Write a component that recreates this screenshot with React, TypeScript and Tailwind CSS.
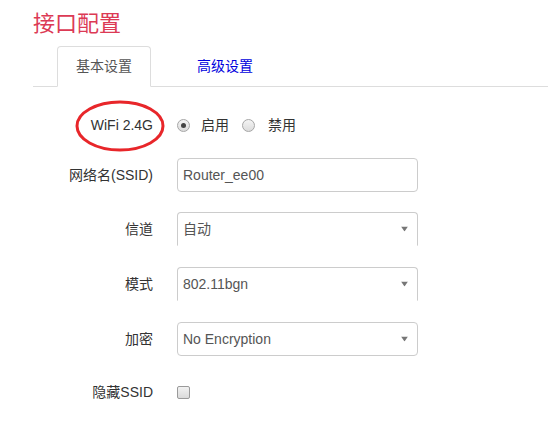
import React from 'react';

const font = { fontFamily: '"Liberation Sans", "Noto Sans CJK SC", sans-serif' };

const Caret = () => (
    <svg width="7" height="5" viewBox="0 0 7 5" className="absolute right-[9px] top-1/2 -translate-y-1/2">
        <path d="M0 0 H7 L3.5 5 Z" fill="#777" />
    </svg>
);

const Radio = ({ checked }: { checked?: boolean }) => (
    <span className="flex h-[13px] w-[13px] items-center justify-center rounded-full border border-[#a6a6a6] bg-gradient-to-b from-[#f4f4f4] to-[#dcdcdc]">
        {checked && <span className="h-[5px] w-[5px] rounded-full bg-[#444]" />}
    </span>
);

const Select = ({ value, open }: { value: string; open?: boolean }) => (
    <div
        className={`relative flex h-[34px] w-[241px] items-center rounded-[4px] border border-[#ccc] bg-white pl-[5px] text-[14px] text-[#555] ${open ? 'rounded-b-none border-b-transparent' : ''}`}
    >
        {value}
        <Caret />
    </div>
);

function Row({ label, children, className = '' }: { label: string; children: React.ReactNode; className?: string }) {
    return (
        <div className={`flex items-center ${className}`}>
            <div className="w-[121px] pr-px text-right text-[14px] text-[#333]">{label}</div>
            <div className="ml-[23px] flex items-center">{children}</div>
        </div>
    );
}

export default function App() {
    return (
        <div className="relative h-[432px] w-[548px] overflow-hidden bg-white pl-[33px]" style={font}>
            {/* Title */}
            <h1 className="pt-[10px] text-[22px] leading-[28px] font-normal text-[#dc3a55]">接口配置</h1>

            {/* Tabs */}
            <div className="mt-[8px] flex border-b border-[#ddd] pl-[24px]">
                <div className="-mb-px flex h-[41px] w-[94px] items-center justify-center rounded-t-[4px] border border-[#ddd] border-b-white bg-white text-[14px] text-[#555]">
                    基本设置
                </div>
                <div className="ml-[27px] flex h-[40px] items-center px-[19px] text-[14px] text-[#0000dd]">高级设置</div>
            </div>

            {/* Form */}
            <div className="mt-[21px]">
                <Row label="WiFi 2.4G" className="h-[34px]">
                    <Radio checked />
                    <span className="ml-[11px] text-[14px] text-[#333]">启用</span>
                    <span className="ml-[13px]">
                        <Radio />
                    </span>
                    <span className="ml-[13px] text-[14px] text-[#333]">禁用</span>
                </Row>

                <Row label="网络名(SSID)" className="mt-[16px]">
                    <div className="flex h-[34px] w-[241px] items-center rounded-[4px] border border-[#ccc] bg-white pl-[5px] text-[14px] text-[#555]">
                        Router_ee00
                    </div>
                </Row>

                <Row label="信道" className="mt-[20px]">
                    <Select value="自动" open />
                </Row>

                <Row label="模式" className="mt-[21px]">
                    <Select value="802.11bgn" open />
                </Row>

                <Row label="加密" className="mt-[21px]">
                    <Select value="No Encryption" />
                </Row>

                <Row label="隐藏SSID" className="mt-[19px] h-[34px]">
                    <span className="h-[13px] w-[13px] rounded-[2px] border border-[#9a9a9a] bg-gradient-to-b from-[#f2f2f2] to-[#dadada]" />
                </Row>
            </div>

            {/* Annotation ring around the WiFi label */}
            <svg width="92" height="54" viewBox="0 0 92 54" className="pointer-events-none absolute left-[74px] top-[99px]">
                <ellipse cx="46" cy="27" rx="43" ry="24" fill="none" stroke="#e8262a" strokeWidth="3" />
            </svg>
        </div>
    );
}
